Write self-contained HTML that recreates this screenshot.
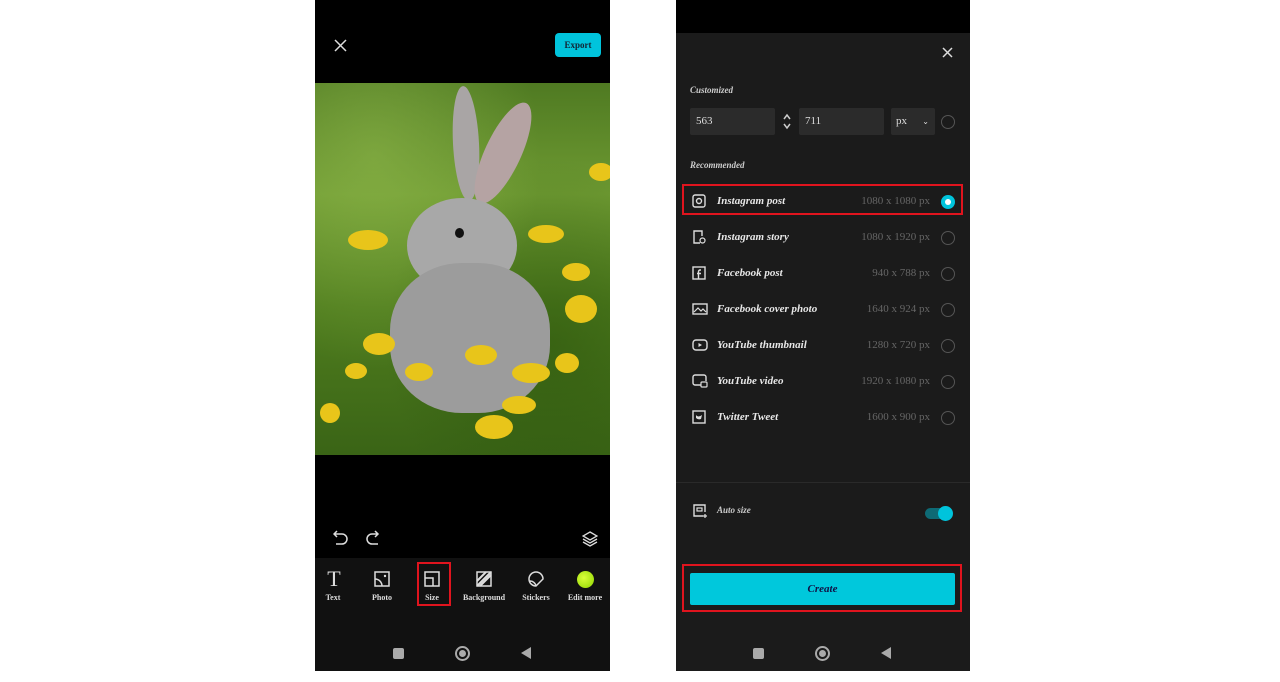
<!DOCTYPE html>
<html><head><style>
*{margin:0;padding:0;box-sizing:border-box}
body{width:1280px;height:682px;background:#fff;position:relative;overflow:hidden;font-family:"Liberation Serif",serif;color:#eee}
.a{position:absolute}
.ph1{left:315px;top:0;width:295px;height:671px;background:#000}
.ph2{left:676px;top:0;width:294px;height:671px;background:#000}
.lbl{font-size:8px;font-weight:bold;color:#ddd;text-align:center;width:60px}
.row{position:absolute;left:14px;width:265px;height:30px}
.row .n{position:absolute;left:27px;top:8px;font-size:11px;font-style:italic;font-weight:bold;color:#e8e8e8}
.row .s{position:absolute;right:25px;top:8px;font-size:11px;color:#666}
.row .r{position:absolute;right:0;top:8px;width:14px;height:14px;border:1.5px solid #555;border-radius:50%}
.row svg{position:absolute;left:2px;top:7px}
.f{position:absolute;background:#e8c51a;border-radius:50%}
</style></head><body>
<div class="a ph1">
  <svg class="a" style="left:19px;top:39px" width="13" height="13" viewBox="0 0 13 13"><path d="M1 1L12 12M12 1L1 12" stroke="#ddd" stroke-width="1.5"/></svg>
  <div class="a" style="left:240px;top:33px;width:46px;height:24px;background:#00c4dc;border-radius:4px;color:#123;font-size:9px;font-weight:bold;text-align:center;line-height:24px">Export</div>
  <div class="a" style="left:0;top:83px;width:295px;height:372px;overflow:hidden;background:linear-gradient(180deg,#4f7a22 0%,#6e9a32 30%,#4f7d1e 60%,#3a6416 100%)">
    <div class="a" style="left:0;top:0;width:295px;height:372px;background:radial-gradient(ellipse at 20% 20%,rgba(150,190,80,.5),transparent 50%),radial-gradient(ellipse at 80% 70%,rgba(40,80,10,.5),transparent 50%)"></div>
    <div class="a" style="left:138px;top:3px;width:26px;height:115px;background:#a9a5a5;border-radius:50%;transform:rotate(-3deg)"></div>
    <div class="a" style="left:170px;top:15px;width:36px;height:110px;background:#b5a3a3;border-radius:50%;transform:rotate(25deg)"></div>
    <div class="a" style="left:92px;top:115px;width:110px;height:95px;background:#a8a8a8;border-radius:50%"></div>
    <div class="a" style="left:75px;top:180px;width:160px;height:150px;background:#9c9c9c;border-radius:45%"></div>
    <div class="a" style="left:140px;top:145px;width:9px;height:10px;background:#111;border-radius:50%"></div>
    <div class="f" style="left:33px;top:147px;width:40px;height:20px"></div>
    <div class="f" style="left:213px;top:142px;width:36px;height:18px"></div>
    <div class="f" style="left:250px;top:212px;width:32px;height:28px"></div>
    <div class="f" style="left:247px;top:180px;width:28px;height:18px"></div>
    <div class="f" style="left:48px;top:250px;width:32px;height:22px"></div>
    <div class="f" style="left:150px;top:262px;width:32px;height:20px"></div>
    <div class="f" style="left:197px;top:280px;width:38px;height:20px"></div>
    <div class="f" style="left:90px;top:280px;width:28px;height:18px"></div>
    <div class="f" style="left:160px;top:332px;width:38px;height:24px"></div>
    <div class="f" style="left:187px;top:313px;width:34px;height:18px"></div>
    <div class="f" style="left:274px;top:80px;width:24px;height:18px"></div>
    <div class="f" style="left:240px;top:270px;width:24px;height:20px"></div>
    <div class="f" style="left:5px;top:320px;width:20px;height:20px"></div>
    <div class="f" style="left:30px;top:280px;width:22px;height:16px"></div>
  </div>
  <svg class="a" style="left:18px;top:529px" width="60" height="16" viewBox="0 0 60 16"><path d="M4 2L1 5L4 8M1 5H9a5 5 0 010 10H3" fill="none" stroke="#ddd" stroke-width="1.5"/><path d="M42 2L45 5L42 8M45 5H39a5 5 0 000 10H45" fill="none" stroke="#ddd" stroke-width="1.5"/></svg>
  <svg class="a" style="left:267px;top:531px" width="16" height="16" viewBox="0 0 16 16"><path d="M8 1L15 5L8 9L1 5Z M1 8L8 12L15 8 M1 11L8 15L15 11" fill="none" stroke="#ddd" stroke-width="1.3"/></svg>
  <div class="a" style="left:0;top:558px;width:295px;height:113px;background:#111"></div>
  <div class="a" style="left:9px;top:569px;width:20px;font-size:22px;color:#ddd;text-align:center;line-height:20px">T</div>
  <svg class="a" style="left:59px;top:571px" width="16" height="16" viewBox="0 0 16 16"><rect x="1" y="1" width="14" height="14" fill="none" stroke="#ddd" stroke-width="1.5"/><path d="M1 8a7 7 0 017 7" fill="none" stroke="#ddd" stroke-width="1.5"/><circle cx="11" cy="5" r="1.2" fill="#ddd"/></svg>
  <svg class="a" style="left:109px;top:571px" width="16" height="16" viewBox="0 0 16 16"><rect x="1" y="1" width="14" height="14" fill="none" stroke="#ddd" stroke-width="1.5"/><path d="M1 7H9V15" fill="none" stroke="#ddd" stroke-width="1.5"/></svg>
  <svg class="a" style="left:161px;top:571px" width="16" height="16" viewBox="0 0 16 16"><rect x="1" y="1" width="14" height="14" fill="none" stroke="#ddd" stroke-width="1.5"/><path d="M1 10L10 1M4 15L15 4M1 15L15 1" stroke="#ddd" stroke-width="2"/></svg>
  <svg class="a" style="left:212px;top:570px" width="18" height="18" viewBox="0 0 18 18"><path d="M9 16A7 7 0 1116 9L9 16Z M3 11a6 6 0 016 5" fill="none" stroke="#ddd" stroke-width="1.5"/></svg>
  <div class="a" style="left:262px;top:571px;width:17px;height:17px;border-radius:50%;background:radial-gradient(circle at 40% 40%,#d9ff3a,#8ed400)"></div>
  <div class="a lbl" style="left:-12px;top:593px">Text</div>
  <div class="a lbl" style="left:37px;top:593px">Photo</div>
  <div class="a lbl" style="left:87px;top:593px">Size</div>
  <div class="a lbl" style="left:139px;top:593px">Background</div>
  <div class="a lbl" style="left:191px;top:593px">Stickers</div>
  <div class="a lbl" style="left:240px;top:593px">Edit more</div>
  <div class="a" style="left:102px;top:562px;width:34px;height:44px;border:2px solid #e0141e"></div>
  <div class="a" style="left:78px;top:648px;width:11px;height:11px;background:#aaa;border-radius:2px"></div>
  <div class="a" style="left:140px;top:646px;width:15px;height:15px;border:2px solid #aaa;border-radius:50%"><div style="margin:2px;width:7px;height:7px;background:#aaa;border-radius:50%"></div></div>
  <div class="a" style="left:206px;top:647px;width:0;height:0;border-top:6px solid transparent;border-bottom:6px solid transparent;border-right:10px solid #aaa"></div>
</div>

<div class="a ph2">
  <div class="a" style="left:0;top:33px;width:294px;height:638px;background:#1b1b1b"></div>
  <svg class="a" style="left:266px;top:47px" width="11" height="11" viewBox="0 0 11 11"><path d="M1 1L10 10M10 1L1 10" stroke="#ddd" stroke-width="1.5"/></svg>
  <div class="a" style="left:14px;top:85px;font-size:9px;font-style:italic;font-weight:bold;color:#ccc">Customized</div>
  <div class="a" style="left:14px;top:108px;width:85px;height:27px;background:#2b2b2b;border-radius:2px;font-size:11px;line-height:27px;padding-left:6px;color:#ddd">563</div>
  <svg class="a" style="left:106px;top:113px" width="10" height="17" viewBox="0 0 10 17"><path d="M2 6L5 2L8 6M2 11L5 15L8 11" fill="none" stroke="#ccc" stroke-width="1.5"/></svg>
  <div class="a" style="left:123px;top:108px;width:85px;height:27px;background:#2b2b2b;border-radius:2px;font-size:11px;line-height:27px;padding-left:6px;color:#ddd">711</div>
  <div class="a" style="left:215px;top:108px;width:44px;height:27px;background:#2b2b2b;border-radius:2px;font-size:11px;line-height:27px;padding-left:5px;color:#ddd">px<span style="position:absolute;right:6px;font-size:8px">&#8964;</span></div>
  <div class="a" style="left:265px;top:115px;width:14px;height:14px;border:1.5px solid #555;border-radius:50%"></div>
  <div class="a" style="left:14px;top:160px;font-size:9px;font-style:italic;font-weight:bold;color:#ccc">Recommended</div>

  <div class="row" style="top:187px"><svg width="14" height="14" viewBox="0 0 14 14"><rect x="1" y="1" width="12" height="12" rx="2" fill="none" stroke="#ddd" stroke-width="1.4"/><circle cx="7" cy="7" r="2.5" fill="none" stroke="#ddd" stroke-width="1.4"/></svg><span class="n">Instagram post</span><span class="s">1080 x 1080 px</span><span class="r" style="border:none;background:#00c4dc"><span style="position:absolute;left:4px;top:4px;width:6px;height:6px;border-radius:50%;background:#fff"></span></span></div>
  <div class="row" style="top:223px"><svg width="14" height="14" viewBox="0 0 14 14"><path d="M8 13H2V1H10V6" fill="none" stroke="#ddd" stroke-width="1.4"/><circle cx="10.5" cy="10.5" r="2.5" fill="none" stroke="#ddd" stroke-width="1.2"/></svg><span class="n">Instagram story</span><span class="s">1080 x 1920 px</span><span class="r"></span></div>
  <div class="row" style="top:259px"><svg width="14" height="14" viewBox="0 0 14 14"><rect x="1" y="1" width="12" height="12" fill="none" stroke="#ddd" stroke-width="1.4"/><path d="M9 4H8a1.5 1.5 0 00-1.5 1.5V13M5 7.5H9" fill="none" stroke="#ddd" stroke-width="1.4"/></svg><span class="n">Facebook post</span><span class="s">940 x 788 px</span><span class="r"></span></div>
  <div class="row" style="top:295px"><svg width="16" height="14" viewBox="0 0 16 14"><rect x="1" y="2" width="14" height="10" fill="none" stroke="#ddd" stroke-width="1.4"/><path d="M2 10L6 6L9 9L11 7L14 10" fill="none" stroke="#ddd" stroke-width="1.2"/></svg><span class="n">Facebook cover photo</span><span class="s">1640 x 924 px</span><span class="r"></span></div>
  <div class="row" style="top:331px"><svg width="16" height="14" viewBox="0 0 16 14"><rect x="1" y="2" width="14" height="10" rx="3" fill="none" stroke="#ddd" stroke-width="1.4"/><path d="M6.5 5V9L10 7Z" fill="#ddd"/></svg><span class="n">YouTube thumbnail</span><span class="s">1280 x 720 px</span><span class="r"></span></div>
  <div class="row" style="top:367px"><svg width="16" height="14" viewBox="0 0 16 14"><path d="M9 11H3a2 2 0 01-2-2V3a2 2 0 012-2h9a2 2 0 012 2V7" fill="none" stroke="#ddd" stroke-width="1.4"/><rect x="9" y="8" width="6" height="5" rx="1" fill="none" stroke="#ddd" stroke-width="1.2"/></svg><span class="n">YouTube video</span><span class="s">1920 x 1080 px</span><span class="r"></span></div>
  <div class="row" style="top:403px"><svg width="14" height="14" viewBox="0 0 14 14"><rect x="1" y="1" width="12" height="12" fill="none" stroke="#ddd" stroke-width="1.4"/><path d="M4 5Q6 8 10 5L9 9Q6 10 4 8Z" fill="#ddd"/></svg><span class="n">Twitter Tweet</span><span class="s">1600 x 900 px</span><span class="r"></span></div>
  <div class="a" style="left:6px;top:184px;width:281px;height:31px;border:2px solid #e0141e"></div>

  <div class="a" style="left:0;top:482px;width:294px;height:1px;background:#2a2a2a"></div>
  <svg class="a" style="left:16px;top:503px" width="16" height="16" viewBox="0 0 16 16"><path d="M11 13H2V2H13V9" fill="none" stroke="#ddd" stroke-width="1.4"/><rect x="5" y="5" width="5" height="3" fill="none" stroke="#ddd" stroke-width="1.2"/><path d="M13 11V15M11 13H15" stroke="#ddd" stroke-width="1.2"/></svg>
  <div class="a" style="left:41px;top:505px;font-size:9px;font-style:italic;font-weight:bold;color:#ccc">Auto size</div>
  <div class="a" style="left:249px;top:508px;width:26px;height:11px;background:#0e6a75;border-radius:6px"></div>
  <div class="a" style="left:262px;top:506px;width:15px;height:15px;background:#00c4dc;border-radius:50%"></div>
  <div class="a" style="left:6px;top:564px;width:280px;height:48px;border:2px solid #e0141e"></div>
  <div class="a" style="left:14px;top:573px;width:265px;height:32px;background:#00c8dc;border-radius:2px;color:#114;font-size:11px;font-style:italic;font-weight:bold;text-align:center;line-height:32px">Create</div>
  <div class="a" style="left:77px;top:648px;width:11px;height:11px;background:#aaa;border-radius:2px"></div>
  <div class="a" style="left:139px;top:646px;width:15px;height:15px;border:2px solid #aaa;border-radius:50%"><div style="margin:2px;width:7px;height:7px;background:#aaa;border-radius:50%"></div></div>
  <div class="a" style="left:205px;top:647px;width:0;height:0;border-top:6px solid transparent;border-bottom:6px solid transparent;border-right:10px solid #aaa"></div>
</div>
</body></html>
